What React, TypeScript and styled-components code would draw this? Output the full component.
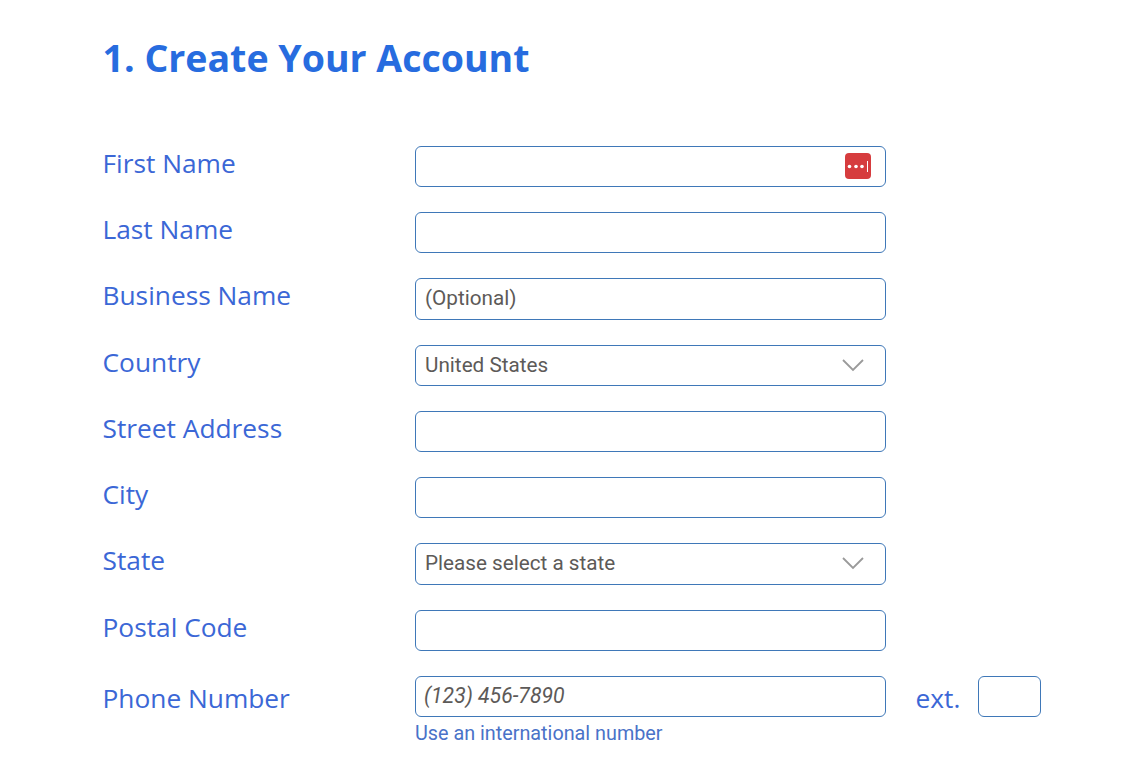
import React from "react";
import styled, { createGlobalStyle } from "styled-components";

const Global = createGlobalStyle`
  html, body { margin: 0; padding: 0; background: #fff; }
  body { font-family: "Open Sans", sans-serif; height: 760px; overflow: hidden; }
`;

const Page = styled.main`
  padding: 33px 0 0 102.5px;
`;

const Title = styled.h1`
  margin: 0 0 63.8px;
  font: 700 37.5px/49px "Open Sans", sans-serif;
  color: #276cdf;
`;

const Form = styled.form`
  display: grid;
  grid-template-columns: 312.5px 471px;
  grid-auto-rows: 41.25px;
  row-gap: 25px;
`;

const Label = styled.label<{ $shift?: number }>`
  font: 400 26.3px/34px "Open Sans", sans-serif;
  color: #3b67d6;
  margin-top: ${(p) => p.$shift ?? 0}px;
  white-space: nowrap;
`;

const Field = styled.div`
  position: relative;
  display: flex;
  align-items: center;
  box-sizing: border-box;
  height: 41.25px;
  border: 1px solid #3f78b8;
  border-radius: 6px;
  background: #fff;
`;

const InputText = styled.span<{ $italic?: boolean }>`
  padding-left: ${(p) => (p.$italic ? 8 : 9)}px;
  margin-top: -1px;
  font: ${(p) => (p.$italic ? "italic 400 21.2px" : "normal 400 20.7px")}/24px Roboto, "Open Sans", sans-serif;
  color: #5d5a58;
  white-space: nowrap;
`;

const KeyBadge = styled.span`
  position: absolute;
  top: 6px;
  right: 14px;
  display: flex;
  width: 26px;
  height: 26px;
`;

const Chevron = styled.svg`
  position: absolute;
  top: 12px;
  right: 20px;
  width: 24px;
  height: 14px;
`;

const PhoneCell = styled.div`
  position: relative;
  display: flex;
  align-items: flex-start;
  width: 626px;
`;

const PhoneField = styled(Field)`
  flex: 0 0 471px;
`;

const ExtLabel = styled.span`
  margin: 5px 0 0 29.5px;
  font: 400 26.3px/34px "Open Sans", sans-serif;
  color: #3b67d6;
`;

const ExtField = styled(Field)`
  flex: 0 0 63px;
  margin-left: 17.5px;
`;

const Hint = styled.a`
  position: absolute;
  top: 46px;
  left: 0;
  font: 400 19.8px/24px Roboto, "Open Sans", sans-serif;
  color: #4a72c8;
  white-space: nowrap;
`;

const Select = ({ value }: { value: string }) => (
  <Field>
    <InputText>{value}</InputText>
    <Chevron viewBox="0 0 24 14" fill="none">
      <path d="M2 2 L12 12 L22 2" stroke="#9a9a9a" strokeWidth="1.8" />
    </Chevron>
  </Field>
);

export default function App() {
  return (
    <Page>
      <Global />
      <Title>1. Create Your Account</Title>
      <Form>
        <Label>First Name</Label>
        <Field>
          <KeyBadge>
            <svg width="26" height="26" viewBox="0 0 26 26">
              <rect width="26" height="26" rx="4" fill="#d63c3e" />
              <circle cx="4.5" cy="13.5" r="1.8" fill="#fff" />
              <circle cx="11" cy="13.5" r="1.8" fill="#fff" />
              <circle cx="17" cy="13.5" r="1.8" fill="#fff" />
              <rect x="22" y="8" width="1" height="11" fill="#fff" />
            </svg>
          </KeyBadge>
        </Field>
        <Label>Last Name</Label>
        <Field />
        <Label>Business Name</Label>
        <Field>
          <InputText>(Optional)</InputText>
        </Field>
        <Label>Country</Label>
        <Select value="United States" />
        <Label>Street Address</Label>
        <Field />
        <Label>City</Label>
        <Field />
        <Label>State</Label>
        <Select value="Please select a state" />
        <Label>Postal Code</Label>
        <Field />
        <Label $shift={5}>Phone Number</Label>
        <PhoneCell>
          <PhoneField>
            <InputText $italic>(123) 456-7890</InputText>
          </PhoneField>
          <ExtLabel>ext.</ExtLabel>
          <ExtField />
          <Hint>Use an international number</Hint>
        </PhoneCell>
      </Form>
    </Page>
  );
}
